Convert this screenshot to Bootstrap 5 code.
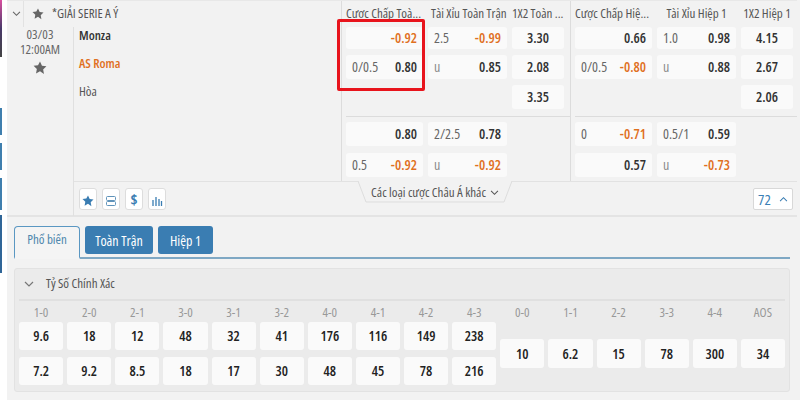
<!DOCTYPE html>
<html lang="en">
<head>
<meta charset="UTF-8">
<title>Odds</title>
<link href="https://cdn.jsdelivr.net/npm/bootstrap@5.3.0/dist/css/bootstrap.min.css" rel="stylesheet">
<style>
  html, body { height: 400px; overflow: hidden; }
  body { background: #fff; font-family: "Open Sans", sans-serif; font-stretch: 75%; font-size: 13px; color: #555; }
  button { font-stretch: 75%; }
  .side-strip { width: 7px; flex: none; background: #fff; }
  .side-strip i { display: block; width: 2px; background: #3f7fae; }
  .strip-top { height: 57px; background: linear-gradient(#d94fa0, #4a3a6a 50%, #444) !important; margin-bottom: 51px; }
  .strip-a { height: 27px; margin-bottom: 8px; }
  .strip-b { height: 32px; margin-bottom: 5px; }
  .strip-c { height: 58px; background: #2f6597 !important; }
  .page-wrap { width: 793px; flex: none; background: #f2f2f2; height: 400px; }
  .match-box { height: 217px; margin-right: 3px; border-top: 1px solid #e8e8e8; border-bottom: 2px solid #e4e4e4; }
  .left-side { width: 334px; flex: none; }
  .league-row { height: 26px; }
  .fold-cell { width: 17px; flex: none; height: 26px; border-right: 1px solid #e2e2e2; padding-left: 5px; }
  .info-col { width: 66px; flex: none; line-height: 15px; color: #666; }
  .team-col { flex: 1; height: 189px; border-left: 1px solid #e0e0e0; }
  .team-name { height: 28px; padding-left: 5px; line-height: 17px; }
  .team-home { font-weight: 600; color: #333; }
  .team-away { font-weight: 600; color: #e0701f; }
  .market-side { flex: 1; }
  .market-top { height: 180px; }
  .first-group { width: 229px; flex: none; padding-left: 4px; border-left: 1px solid #dcdcdc; }
  .second-group { flex: 1; padding-left: 4px; border-left: 1px solid #dcdcdc; }
  .mkt-head { height: 26px; color: #555; white-space: nowrap; gap: 5px; }
  .head-tight { padding-left: 3px; }
  .odd-line { gap: 5px; }
  .cell-a { width: 77px; flex: none; }
  .cell-b { width: 79px; flex: none; }
  .cell-c { width: 52px; flex: none; }
  .line-one { height: 28px; }
  .line-two { height: 30px; }
  .line-three { height: 31px; }
  .line-four { height: 31px; }
  .odd-box { height: 24px; background: #fafafa; border-radius: 3px; padding: 0 6px; line-height: 24px; font-size: 14px; }
  .line-one .odd-box { height: 22px; line-height: 21px; }
  .odd-val { font-weight: 600; color: #333; }
  .odd-neg { font-weight: 600; color: #e0701f; }
  .hdp-txt { color: #666; font-weight: 400; }
  .unit-txt { color: #8a8a8a; font-weight: 400; }
  .odds-div { border-top: 1px solid #dcdcdc; padding-top: 5px; }
  .red-frame { position: absolute; left: -9px; top: -8px; width: 88px; height: 72px; border: 3px solid #e8141c; border-radius: 2px; pointer-events: none; }
  .tool-row { height: 35px; border-top: 1px solid #e2e2e2; }
  .tool-btn { width: 18px; height: 22px; background: #fff; border: 1px solid #ddd; border-radius: 3px; padding: 0; line-height: 18px; }
  .tool-gap { gap: 5px; padding-left: 5px; }
  .dollar-btn { color: #3a7db2; font-weight: 700; font-size: 15px; }
  .more-tab { position: absolute; top: -1px; left: 16px; width: 156px; height: 23px; color: #555; }
  .more-tab svg.tab-shape { position: absolute; left: 0; top: 0; }
  .more-tab span, .more-tab svg.tab-arrow { position: relative; }
  .count-btn { width: 40px; height: 22px; background: #fff; border: 1px solid #d8d8d8; border-radius: 2px; color: #3a7fb5; font-size: 15px; }
  .tab-area { height: 42px; padding-top: 9px; margin: 0 10px 0 7px; border-bottom: 2px solid #7fa8c4; }
  .tab-on { width: 66px; height: 33px; background: #f4f4f4; border: 1px solid #5a97c2; border-bottom: 2px solid #f4f4f4; border-radius: 4px 4px 0 0; color: #4d86ad; }
  .tab-off { height: 28px; margin-left: 5px; background: #3a7db2; border-radius: 3px; color: #fff; font-size: 14px; }
  .score-panel { margin: 9px 10px 0 7px; background: #ebebeb; border: 1px solid #e2e2e2; border-radius: 3px; height: 124px; padding: 0 4px; }
  .score-title { height: 32px; border-bottom: 2px solid #e0e0e0; padding-left: 5px; gap: 12px; }
  .score-grid { display: grid; grid-template-columns: repeat(16, 1fr); column-gap: 4px; }
  .score-label { text-align: center; color: #999; height: 21px; line-height: 22px; }
  .score-stack { display: flex; flex-direction: column; gap: 7px; }
  .score-box { height: 28px; line-height: 28px; text-align: center; background: #fafafa; border-radius: 3px; font-weight: 600; font-size: 14px; color: #222; }
  .score-mid { margin-top: 17px; height: 29px; line-height: 29px; }
</style>
</head>
<body>
<div class="d-flex">
  <div class="side-strip">
    <i class="strip-top"></i><i class="strip-a"></i><i class="strip-a"></i><i class="strip-b"></i><i class="strip-c"></i>
  </div>
  <div class="page-wrap">
    <div class="match-box d-flex">
      <div class="left-side">
        <div class="league-row d-flex align-items-center">
          <div class="fold-cell d-flex align-items-center"><svg width="9" height="6" viewBox="0 0 10 7"><path d="M1 1l4 4 4-4" fill="none" stroke="#666" stroke-width="1.300"/></svg></div>
          <svg class="ms-2" width="12" height="12" viewBox="0 0 24 24"><path d="M12 1l3.400 7.200 7.600 1-5.600 5.400 1.400 7.800L12 17.600 5.200 21.400l1.400-7.800L1 8.200l7.600-1z" fill="#666"/></svg>
          <span class="ms-2">*GIẢI SERIE A Ý</span>
        </div>
        <div class="d-flex">
          <div class="info-col text-center">
            <div>03/03</div>
            <div>12:00AM</div>
            <svg class="mt-1" width="14" height="14" viewBox="0 0 24 24"><path d="M12 1l3.400 7.200 7.600 1-5.600 5.400 1.400 7.800L12 17.600 5.200 21.400l1.400-7.800L1 8.200l7.600-1z" fill="#666"/></svg>
          </div>
          <div class="team-col d-flex flex-column">
            <div class="team-name team-home">Monza</div>
            <div class="team-name team-away">AS Roma</div>
            <div class="team-name">Hòa</div>
            <div class="tool-row tool-gap d-flex align-items-center mt-auto">
              <button class="tool-btn"><svg width="12" height="12" viewBox="0 0 24 24"><path d="M12 1l3.400 7.200 7.600 1-5.600 5.400 1.400 7.800L12 17.600 5.200 21.400l1.400-7.800L1 8.200l7.600-1z" fill="#3a7db2"/></svg></button>
              <button class="tool-btn"><svg width="12" height="12" viewBox="0 0 12 12"><rect x="1.500" y="1.500" width="9" height="4" rx="1" fill="none" stroke="#5f93ba"/><rect x="1.500" y="6.500" width="9" height="4" rx="1" fill="none" stroke="#5f93ba"/></svg></button>
              <button class="tool-btn dollar-btn">$</button>
              <button class="tool-btn"><svg width="12" height="12" viewBox="0 0 12 12"><path d="M2 5v6M5 2v9M8 4v7M10.500 6v5" stroke="#3a7db2" stroke-width="1.300"/></svg></button>
            </div>
          </div>
        </div>
      </div>
      <div class="market-side">
        <div class="market-top d-flex">
          <div class="first-group">
            <div class="mkt-head d-flex align-items-center"><span class="cell-a">Cược Chấp Toà...</span><span class="cell-b head-tight">Tài Xỉu Toàn Trận</span><span class="cell-c">1X2 Toàn ...</span></div>
            <div class="position-relative">
              <div class="red-frame"></div>
              <div class="odd-line line-one d-flex"><div class="cell-a odd-box text-end odd-neg">-0.92</div><div class="cell-b odd-box d-flex justify-content-between"><span class="hdp-txt">2.5</span><span class="odd-neg">-0.99</span></div><div class="cell-c odd-box text-center odd-val">3.30</div></div>
              <div class="odd-line line-two d-flex"><div class="cell-a odd-box d-flex justify-content-between"><span class="hdp-txt">0/0.5</span><span class="odd-val">0.80</span></div><div class="cell-b odd-box d-flex justify-content-between"><span class="unit-txt">u</span><span class="odd-val">0.85</span></div><div class="cell-c odd-box text-center odd-val">2.08</div></div>
              <div class="odd-line line-three d-flex"><div class="cell-a"></div><div class="cell-b"></div><div class="cell-c odd-box text-center odd-val">3.35</div></div>
            </div>
            <div class="odds-div">
              <div class="odd-line line-four d-flex"><div class="cell-a odd-box text-end odd-val">0.80</div><div class="cell-b odd-box d-flex justify-content-between"><span class="hdp-txt">2/2.5</span><span class="odd-val">0.78</span></div></div>
              <div class="odd-line line-four d-flex"><div class="cell-a odd-box d-flex justify-content-between"><span class="hdp-txt">0.5</span><span class="odd-neg">-0.92</span></div><div class="cell-b odd-box d-flex justify-content-between"><span class="unit-txt">u</span><span class="odd-neg">-0.92</span></div></div>
            </div>
          </div>
          <div class="second-group">
            <div class="mkt-head d-flex align-items-center"><span class="cell-a">Cược Chấp Hiệ...</span><span class="cell-b text-center">Tài Xỉu Hiệp 1</span><span class="cell-c text-center">1X2 Hiệp 1</span></div>
            <div class="odd-line line-one d-flex"><div class="cell-a odd-box text-end odd-val">0.66</div><div class="cell-b odd-box d-flex justify-content-between"><span class="hdp-txt">1.0</span><span class="odd-val">0.98</span></div><div class="cell-c odd-box text-center odd-val">4.15</div></div>
            <div class="odd-line line-two d-flex"><div class="cell-a odd-box d-flex justify-content-between"><span class="hdp-txt">0/0.5</span><span class="odd-neg">-0.80</span></div><div class="cell-b odd-box d-flex justify-content-between"><span class="unit-txt">u</span><span class="odd-val">0.88</span></div><div class="cell-c odd-box text-center odd-val">2.67</div></div>
            <div class="odd-line line-three d-flex"><div class="cell-a"></div><div class="cell-b"></div><div class="cell-c odd-box text-center odd-val">2.06</div></div>
            <div class="odds-div">
              <div class="odd-line line-four d-flex"><div class="cell-a odd-box d-flex justify-content-between"><span class="hdp-txt">0</span><span class="odd-neg">-0.71</span></div><div class="cell-b odd-box d-flex justify-content-between"><span class="hdp-txt">0.5/1</span><span class="odd-val">0.59</span></div></div>
              <div class="odd-line line-four d-flex"><div class="cell-a odd-box text-end odd-val">0.57</div><div class="cell-b odd-box d-flex justify-content-between"><span class="unit-txt">u</span><span class="odd-neg">-0.73</span></div></div>
            </div>
          </div>
        </div>
        <div class="tool-row position-relative d-flex justify-content-end align-items-center pe-1">
          <div class="more-tab d-flex align-items-center justify-content-center gap-1">
            <svg class="tab-shape" width="156" height="23" viewBox="0 0 156 23"><path d="M1 0l8 21h138l8-21" fill="#f2f2f2" stroke="#ddd"/></svg>
            <span>Các loại cược Châu Á khác</span>
            <svg class="tab-arrow" width="9" height="6" viewBox="0 0 10 7"><path d="M1 1l4 4 4-4" fill="none" stroke="#555" stroke-width="1.200"/></svg>
          </div>
          <div class="count-btn d-flex align-items-center justify-content-center gap-2">72 <svg width="9" height="6" viewBox="0 0 10 7"><path d="M1 6l4-4 4 4" fill="none" stroke="#3a7db2" stroke-width="1.200"/></svg></div>
        </div>
      </div>
    </div>
    <div class="tab-area d-flex align-items-start">
      <div class="tab-on d-flex align-items-center justify-content-center pb-1">Phổ biến</div>
      <div class="tab-off d-flex align-items-center justify-content-center" style="width:68px">Toàn Trận</div>
      <div class="tab-off d-flex align-items-center justify-content-center" style="width:55px">Hiệp 1</div>
    </div>
    <div class="score-panel">
      <div class="score-title d-flex align-items-center">
        <svg width="10" height="7" viewBox="0 0 10 7"><path d="M1 1l4 4 4-4" fill="none" stroke="#777" stroke-width="1.200"/></svg>
        <span>Tỷ Số Chính Xác</span>
      </div>
      <div class="score-grid" id="score-grid"></div>
    </div>
  </div>
</div>
<script>
  const scores = [
    ['1-0','9.6','7.2'],['2-0','18','9.2'],['2-1','12','8.5'],['3-0','48','18'],['3-1','32','17'],['3-2','41','30'],
    ['4-0','176','48'],['4-1','116','45'],['4-2','149','78'],['4-3','238','216'],
    ['0-0','10'],['1-1','6.2'],['2-2','15'],['3-3','78'],['4-4','300'],['AOS','34']
  ];
  document.getElementById('score-grid').innerHTML = scores.map(s => {
    const boxes = s.length === 3
      ? `<div class="score-stack"><div class="score-box">${s[1]}</div><div class="score-box">${s[2]}</div></div>`
      : `<div class="score-box score-mid">${s[1]}</div>`;
    return `<div><div class="score-label">${s[0]}</div>${boxes}</div>`;
  }).join('');
</script>
<script src="https://cdn.jsdelivr.net/npm/bootstrap@5.3.0/dist/js/bootstrap.bundle.min.js"></script>
</body>
</html>
